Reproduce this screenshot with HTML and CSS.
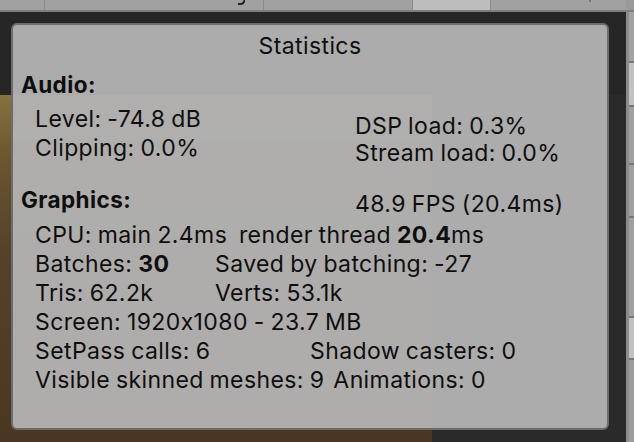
FILE: index.html
```html
<!DOCTYPE html>
<html>
<head>
<meta charset="utf-8">
<link rel="stylesheet" href="styles.css">
</head>
<body>
<div class="app">
  <div class="topbar">
    <div class="tab t1"></div>
    <div class="tab t2"><span class="desc"></span></div>
    <div class="tab t3"></div>
    <div class="tab t4"></div>
    <div class="tab t5"><span class="tick"></span></div>
    <div class="tab t6"></div>
  </div>
  <div class="main">
    <div class="view">
      <div class="toolbar"></div>
      <div class="scenerow">
        <div class="scene"></div>
        <div class="dark"></div>
      </div>
    </div>
    <div class="strip">
      <div class="strip-a"></div>
      <div class="strip-b">
        <div class="seg s1"></div>
        <div class="seg s2"></div>
        <div class="seg s3"></div>
        <div class="seg s4"></div>
        <div class="seg s5"></div>
        <div class="seg s6"></div>
      </div>
    </div>
  </div>

  <div class="stats">
    <div class="title">Statistics</div>
    <div class="label audio-label">Audio:</div>
    <div class="audio-cols">
      <div class="col">
        <div class="line">Level: -74.8 dB</div>
        <div class="line">Clipping: 0.0%</div>
      </div>
      <div class="col right">
        <div class="rline">DSP load: 0.3%</div>
        <div class="rline">Stream load: 0.0%</div>
      </div>
    </div>
    <div class="gfx-head">
      <div class="label">Graphics:</div>
      <div class="fps">48.9 FPS (20.4ms)</div>
    </div>
    <div class="gfx-body">
      <div class="line">CPU: main 2.4ms&nbsp; render thread <b>20.4</b>ms</div>
      <div class="line pair p1"><span>Batches: <b>30</b></span><span>Saved by batching: -27</span></div>
      <div class="line pair p1"><span>Tris: 62.2k</span><span>Verts: 53.1k</span></div>
      <div class="line">Screen: 1920x1080 - 23.7 MB</div>
      <div class="line pair p2"><span>SetPass calls: 6</span><span>Shadow casters: 0</span></div>
      <div class="line pair p3"><span>Visible skinned meshes: 9</span><span>Animations: 0</span></div>
    </div>
  </div>
</div>
</body>
</html>
```

FILE: styles.css
```css
* { box-sizing: border-box; }
html, body { margin: 0; padding: 0; }
body {
  width: 634px;
  height: 442px;
  overflow: hidden;
  background: #222;
  font-family: "Inter", "Roboto", sans-serif;
}
.app {
  position: relative;
  width: 634px;
  height: 442px;
  display: flex;
  flex-direction: column;
}
.topbar {
  height: 12px;
  display: flex;
  background: #a1a1a1;
  border-bottom: 2px solid #7e7e7e;
}
.tab {
  height: 10px;
  border-right: 1px solid #8a8a8a;
  position: relative;
  overflow: hidden;
}
.t1 { width: 45px; }
.t2 { width: 219px; }
.t3 { width: 149px; }
.t4 { width: 78px; background: #bdbdbd; }
.t5 { width: 135px; border-right: none; }
.t6 { flex: 1; background: #9a9a9a; border-right: none; }
.desc {
  position: absolute;
  left: 193px;
  top: 0;
  width: 7px;
  height: 5px;
  border-right: 2px solid #222;
  border-bottom: 2px solid #222;
  border-bottom-right-radius: 4px;
  transform: skewX(-12deg);
}
.tick {
  position: absolute;
  left: 98px;
  top: 0;
  width: 2px;
  height: 2px;
  background: #777;
}
.main {
  flex: 1;
  display: flex;
}
.view {
  width: 626px;
  display: flex;
  flex-direction: column;
}
.toolbar {
  height: 83px;
  background: #262626;
}
.scenerow {
  flex: 1;
  display: flex;
}
.scene {
  width: 432px;
  background: linear-gradient(180deg, #85723d 0%, #6a5630 18%, #55422a 45%, #4a3721 100%);
}
.dark {
  flex: 1;
  background: #2a2a2a;
}
.strip {
  width: 8px;
  display: flex;
}
.strip-a {
  width: 3px;
  background: #8c8c8c;
}
.strip-b {
  flex: 1;
  display: flex;
  flex-direction: column;
  background: #9d9d9d;
}
.seg { border-bottom: 2px solid #777; }
.s1 { height: 51px; background: #a3a3a3; }
.s2 { height: 44px; background: #c2c2c2; }
.s3 { height: 58px; background: #a0a0a0; }
.s4 { height: 53px; background: #a0a0a0; }
.s5 { height: 100px; background: #a0a0a0; }
.s6 { height: 42px; background: #c2c2c2; }

.stats {
  position: absolute;
  left: 11px;
  top: 23px;
  width: 598px;
  height: 407px;
  background: rgba(178, 178, 178, 0.96);
  border: 2px solid #6c6c6c;
  border-radius: 6px;
  padding: 7px 0 0 8px;
  color: #0e0e0e;
  font-size: 23px;
  line-height: 29px;
  letter-spacing: 0.4px;
  word-spacing: -1px;
  font-feature-settings: "calt" 0;
}
.title {
  text-align: center;
  margin-left: -8px;
}
.label {
  font-weight: 700;
  font-size: 22.5px;
  letter-spacing: 0.4px;
}
.audio-label { margin-top: 9px; }
.audio-cols {
  display: grid;
  grid-template-columns: 320px 1fr;
  padding-left: 14px;
  margin-top: 6px;
}
.right { padding-top: 8px; }
.rline { line-height: 27px; }
.gfx-head {
  display: grid;
  grid-template-columns: 334px 1fr;
  margin-top: 18px;
}
.fps { padding-top: 5px; }
.gfx-body {
  padding-left: 14px;
  margin-top: 2px;
}
.line b { font-weight: 700; }
.pair { display: grid; }
.p1 { grid-template-columns: 180px 1fr; }
.p2 { grid-template-columns: 275px 1fr; }
.p3 { display: flex; gap: 9px; }
```
